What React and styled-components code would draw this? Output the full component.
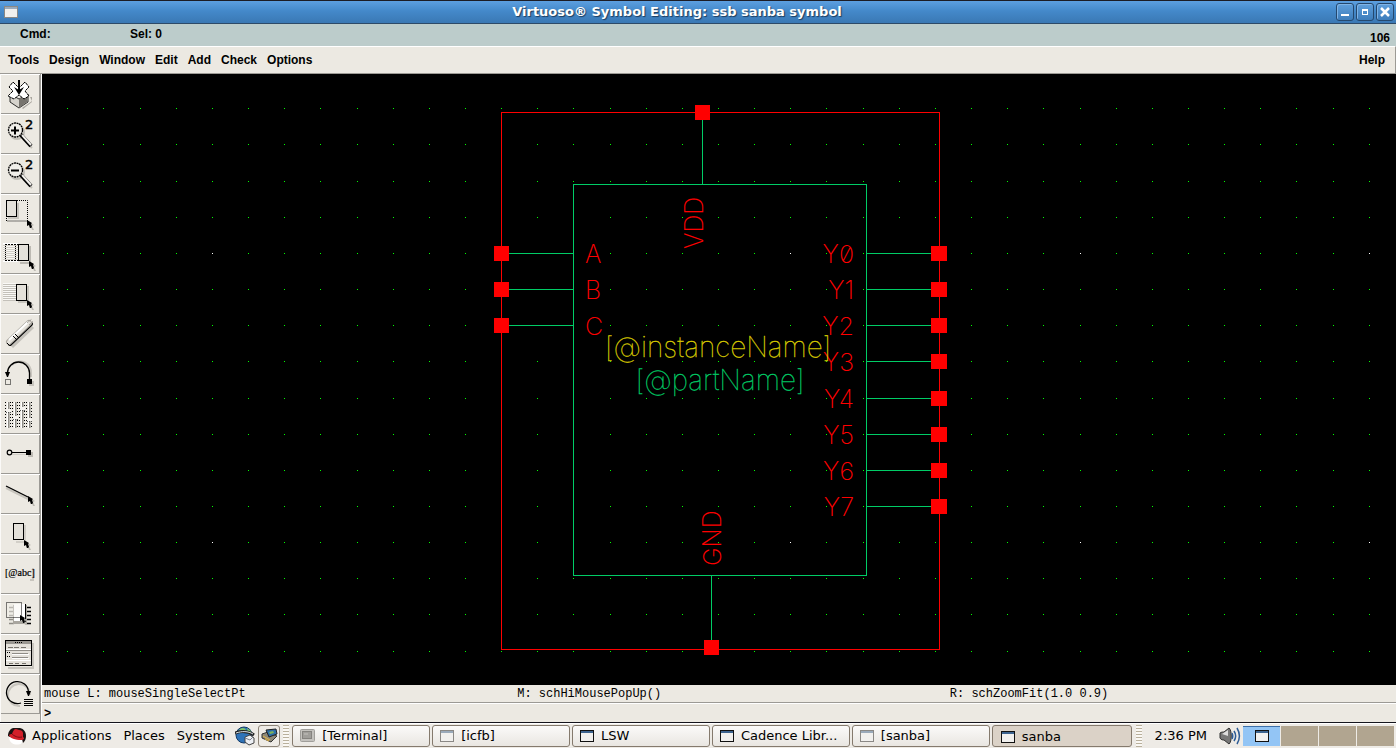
import React from 'react'
import styled, { createGlobalStyle } from 'styled-components'


const GlobalStyle = createGlobalStyle`
  * { box-sizing : border-box; }
  body {
    margin : 0;
    background : #ece9e2;
    font-family : "DejaVu Sans", sans-serif;
    color : #000;
  }
  button { font : inherit; color : inherit; }
`

const menus = ['Tools', 'Design', 'Window', 'Edit', 'Add', 'Check', 'Options']

const tasks = [
  { name: '[Terminal]', icon: 'terminal' },
  { name: '[icfb]', icon: 'dim' },
  { name: 'LSW', icon: 'window' },
  { name: 'Cadence Libr...', icon: 'window' },
  { name: '[sanba]', icon: 'dim' },
  { name: 'sanba', icon: 'window', active: true },
]

const outputs = [253, 289, 325, 361, 398, 434, 470, 506]
const inputs = [['A', 253], ['B', 289], ['C', 325]]

const range = (n) => Array.from({ length: n }, (_, i) => i)

// grid pitch is not a whole pixel, so each dot is snapped down
const gridStep = (i) => Math.floor(i * 36.15 + 0.81)


/* ---------- toolbar drawings, all on a 40 x 40 grid ---------- */

function Pointer({ x, y }) {
  return (
    <g transform={`translate(${x} ${y})`}>
      <path d="M2 2l5 3-2 1 2 4-2 0-1-3-2 1z" fill="#bdbab3" />
      <path d="M0 0l5 3-1 1 1 3-1 1-1 0-1-3-2 1z" fill="#000" />
    </g>
  )
}

function Magnifier({ minus }) {
  return (
    <>
      <g stroke="#c2bfb8" fill="none" strokeWidth="2">
        <circle cx="17" cy="18" r="7" />
        <path d="M23 25l9 9" />
      </g>
      <path d="M21 21l10 11" stroke="#000" strokeWidth="4" />
      <path d="M22 21l9 10" stroke="#f4f2ee" strokeWidth="2" />
      <circle cx="15.5" cy="16" r="7" fill="#f1efea" stroke="#000" strokeWidth="1.3" strokeDasharray="2 .6" />
      <path d="M11 16.5h8" stroke="#000" strokeWidth="2" />
      {!minus && <path d="M15 12.5v8" stroke="#000" strokeWidth="2" />}
      <text x="25" y="15" fontFamily="DejaVu Sans" stroke="#000" strokeWidth="0.5" fontSize="13">2</text>
    </>
  )
}

const toolIcons = [
  ['Check and save', (
    <>
      <path d="M22 34l10-7-2-4 2 0 0 5-9 7z" fill="#a9a69f" />
      <path d="M10 20v8l9 6 9-6v-8l-9 5z" fill="#d6d3cc" stroke="#000" strokeWidth="0.8" />
      <path d="M19 25v9l8-6v-8z" fill="#77746e" />
      <path d="M13 8l6 6 6-6 4 5-4 4 4 5-5 3-5-4-5 4-6-3 5-5-4-4z" fill="#fff" stroke="#000" strokeDasharray="3 .6" />
      <path d="M19 6v11" stroke="#000" strokeWidth="2" />
      <path d="M14 13l5 8 5-8-5 3z" fill="#000" />
    </>
  )],
  ['Zoom in by 2', <Magnifier />],
  ['Zoom out by 2', <Magnifier minus />],
  ['Stretch', (
    <>
      <path d="M18 9v15H8" stroke="#c8c5be" strokeWidth="2" fill="none" />
      <path d="M17 6.5h10.500v20.500H6.500v-4" stroke="#000" strokeDasharray="1 1" fill="none" />
      <rect x="6.500" y="6.500" width="10" height="16" fill="#e4e1da" stroke="#000" />
      <Pointer x={27} y={26} />
    </>
  )],
  ['Copy', (
    <>
      {range(10).map(i => <path key={i} d={`M3 ${9.5 + i * 2}h15`} stroke={i % 9 ? '#d2cfc8' : '#fff'} />)}
      {range(9).map(i => <path key={i} d={`M3 ${10.5 + i * 2}h15`} stroke="#f8f6f2" />)}
      <path d="M5.500 10v18M15.500 10v18" stroke="#000" strokeDasharray="1 1" />
      <path d="M5 10.500h13M5 26.500h13" stroke="#000" strokeDasharray="2 1" />
      <path d="M30 12v17H20" stroke="#bdbab3" strokeWidth="2" fill="none" />
      <rect x="18.500" y="10.500" width="10" height="16" fill="#e4e1da" stroke="#000" />
      <Pointer x={29} y={27} />
    </>
  )],
  ['Move', (
    <>
      {range(9).map(i => <path key={i} d={`M3 ${10.5 + i * 2}h13`} stroke="#c4c1ba" />)}
      {range(9).map(i => <path key={i} d={`M3 ${9.5 + i * 2}h13`} stroke="#faf9f6" />)}
      <path d="M28 12v16H18" stroke="#c8c5be" strokeWidth="2" fill="none" />
      <rect x="16.500" y="10.500" width="10" height="16" fill="#e4e1da" stroke="#000" />
      <Pointer x={27} y={26} />
    </>
  )],
  ['Delete', (
    <>
      <path d="M12 33L33 13" stroke="#c4c1ba" strokeWidth="3" />
      <path d="M10 30L31 10" stroke="#000" strokeWidth="4" strokeLinecap="round" />
      <path d="M9 28L29 9" stroke="#a9a69f" strokeWidth="6" strokeLinecap="round" />
      <path d="M9 28L29 9" stroke="#e4e1da" strokeWidth="4" strokeLinecap="round" />
      <path d="M9 26L28 8" stroke="#fff" strokeWidth="2" />
      <path d="M7 29l2 2" stroke="#000" />
      <path d="M13 22l4 4M15 20l4 4" stroke="#000" />
      <path d="M27 9l5-4M29 11l4-4" stroke="#8f8c86" strokeDasharray="1 1" />
    </>
  )],
  ['Undo', (
    <>
      <path d="M31 23V20A11 11 0 0 0 12 11" stroke="#c8c5be" strokeWidth="2" fill="none" />
      <path d="M29.500 25V19A11 11 0 0 0 7.500 19" stroke="#000" strokeWidth="1.300" fill="none" />
      <path d="M5 18h5l-2 5h-1z" fill="#000" />
      <rect x="5.500" y="25.500" width="5" height="5" fill="none" stroke="#000" strokeDasharray="1 1" />
      <rect x="29" y="27" width="5" height="5" fill="#c8c5be" />
      <rect x="27" y="25" width="5" height="5" fill="#000" />
    </>
  )],
  ['Properties', (
    <>
      {[8, 15, 22, 29].map((x, i) => (
        <g key={x}>
          <path d={`M${x - 2.5} 8v26M${x + 2.5} 8v26`} stroke="#000" strokeDasharray="1 2" />
          <path d={`M${x + 0.5} 8v26`} stroke="#8f8c86" strokeWidth="2" />
          <path d={`M${x - 0.5} 8v26`} stroke="#fff" />
          <rect x={x - 2} y={[15, 22, 13, 24][i]} width="5" height="3" fill="#f4f2ee" />
          <path d={`M${x - 2} ${[18, 25, 16, 27][i] + 0.5}h5`} stroke="#555" strokeDasharray="1 1" />
        </g>
      ))}
    </>
  )],
  ['Pin', (
    <>
      <path d="M12 20.500h14" stroke="#d2cfc8" />
      <rect x="28" y="18" width="5" height="5" fill="#bdbab3" />
      <circle cx="9.500" cy="18.500" r="2.300" fill="#ece9e2" stroke="#000" strokeWidth="1.200" />
      <path d="M12 18.500h15" stroke="#000" />
      <rect x="26" y="16" width="5" height="5" fill="#000" />
    </>
  )],
  ['Line', (
    <>
      <path d="M6 14l22 11" stroke="#c8c5be" strokeWidth="2" />
      <path d="M6 12l22 11" stroke="#000" strokeWidth="1.300" />
      <Pointer x={28} y={22} />
    </>
  )],
  ['Rectangle', (
    <>
      <path d="M25 11v17H16" stroke="#d2cfc8" strokeWidth="2" fill="none" />
      <rect x="13.500" y="9.500" width="10" height="16" fill="#e4e1da" stroke="#000" />
      <Pointer x={24} y={26} />
    </>
  )],
  ['Label', (
    <>
      <path d="M33 14v12h-3" stroke="#c8c5be" strokeWidth="2" fill="none" />
      <text x="5" y="22" fontFamily="Liberation Serif" fontSize="10" stroke="#000" strokeWidth="0.2">[@abc]</text>
    </>
  )],
  ['Selection box', (
    <>
      {range(5).map(i => <path key={i} d={`M26 ${13.5 + i * 4}h5`} stroke="#000" strokeWidth="1.500" />)}
      {range(5).map(i => <path key={i} d={`M9 ${13.5 + i * 4}h5`} stroke="#8f8c86" strokeWidth="1.500" />)}
      <rect x="13" y="11" width="14" height="19" fill="#a9a69f" />
      <rect x="14" y="10" width="11" height="17" fill="#fff" />
      <path d="M25.500 10v18" stroke="#000" />
      <rect x="6.500" y="8.500" width="15" height="15" fill="#f4f2ee" fillOpacity="0.400" stroke="#000" strokeDasharray="1 1" />
      <Pointer x={20} y={21} />
    </>
  )],
  ['Options form', (
    <>
      <path d="M33 9v25H8" stroke="#c8c5be" strokeWidth="2" fill="none" />
      <rect x="5.500" y="6.500" width="26" height="25" fill="#e4e1da" stroke="#000" />
      <rect x="6" y="7" width="25" height="3" fill="#9a9791" />
      <path d="M15 8.500h7" stroke="#000" strokeDasharray="1 1" />
      {[8, 14, 21].map(x => <path key={x} d={`M${x} 13.500h5M${x + 1} 29.500h4`} stroke="#77746e" />)}
      <path d="M6 15.500h25M12 20.500h17M12 24.500h17M6 26.500h25" stroke="#fff" />
      <path d="M6 16.500h25M12 19.500h16M12 23.500h16" stroke="#8f8c86" />
      <path d="M7 18.500h4M7 22.500h4" stroke="#000" strokeDasharray="1 1" />
    </>
  )],
  ['Repeat', (
    <>
      <path d="M20 32A11 11 0 1 1 30 21" stroke="#c8c5be" strokeWidth="2" fill="none" />
      <path d="M21 29A11 11 0 1 1 28.500 18" stroke="#000" strokeWidth="1.300" fill="none" />
      <path d="M26 17h5l-2 5h-1z" fill="#000" />
      <path d="M24 25.500h9M24 27.500h9M24 29.500h9M24 31.500h9" stroke="#000" />
    </>
  )],
]


/* ---------- small pictures of the desktop ---------- */

function WindowIcon({ dim }) {
  return (
    <svg width="14" height="12" viewBox="0 0 14 12" shapeRendering="crispEdges" aria-hidden="true">
      <rect x="0.500" y="0.500" width="13" height="11" fill="#f1f0ee" stroke={dim ? '#8a8885' : '#111'} />
      <rect x="1" y="1" width="12" height="2" fill={dim ? '#9aaabb' : '#3d6490'} />
    </svg>
  )
}

function TerminalIcon() {
  return (
    <svg width="15" height="14" viewBox="0 0 15 14" aria-hidden="true">
      <rect x="0.500" y="0.500" width="14" height="12" rx="1" fill="#c4c2be" stroke="#a09e9a" />
      <rect x="2.500" y="2.500" width="9" height="7" fill="#a09e9a" stroke="#85837f" />
      <path d="M4 5h4" stroke="#c4c2be" />
    </svg>
  )
}

function RedHat() {
  return (
    <svg width="20" height="18" viewBox="0 0 20 18" aria-hidden="true">
      <circle cx="10" cy="9" r="8" fill="#fff" />
      <path d="M1 9c0-4 2-7 5-8h7c4 1 6 4 6 8 0 3-1 5-3 7l-1-4-12-2z" fill="#1a1212" />
      <path d="M2 8c1-1 2-1 3-1 1-3 2-5 4-5 1 0 2 1 3 1 2 0 4 1 4 3v4c2 1 1 3-2 3-5 0-12-2-12-5z" fill="#d3202a" />
      <path d="M5 7c2 2 6 4 10 3" stroke="#7d0d13" fill="none" />
      <path d="M2 11c3 3 8 3 12 3l1 2c-4 3-12 2-13-5z" fill="#fff" />
    </svg>
  )
}

function BrowserIcon() {
  return (
    <svg width="20" height="20" viewBox="0 0 20 20" aria-hidden="true">
      <circle cx="9" cy="9" r="8" fill="#2f73b8" stroke="#143a66" />
      <path d="M4 4c3-3 6-2 7 0s-2 3-4 3-4 0-3-3zM12 2l4 3 0 3-3-1z" fill="#7fc36a" />
      <path d="M0 7c6-2 13-2 19 2" stroke="#222" strokeWidth="3" fill="none" />
      <path d="M1 7c6-2 12-2 17 1" stroke="#dfe7ee" fill="none" />
      <path d="M10 11l5-2 4 3 0 5-5 2-4-3z" fill="#eceff4" stroke="#444" />
      <path d="M10 12l5 2 3-3" stroke="#7a7f8a" fill="none" />
    </svg>
  )
}

function DesktopIcon() {
  return (
    <svg width="17" height="15" viewBox="0 0 17 15" aria-hidden="true">
      <path d="M1 6l6-2 9 4-6 6-9-4z" fill="#8d8878" stroke="#333" />
      <path d="M5 2l10-1 1 5-8 3z" fill="#2e6fa8" stroke="#222" />
      <path d="M8 4l4-1 1 2-4 1z" fill="#7fb35a" />
      <path d="M2 8l7 4M4 11l4 2" stroke="#e2b344" />
    </svg>
  )
}

function SpeakerIcon() {
  return (
    <svg width="22" height="18" viewBox="0 0 22 18" aria-hidden="true">
      <path d="M1 6c1-1 3-1 4-1l5-4c3 2 3 14 0 16l-5-4c-1 0-3 0-4-2z" fill="#777" stroke="#333" />
      <path d="M3 7l6-4v6z" fill="#ddd" />
      <path d="M13 6c1 2 1 4 0 6M15 4c2 3 2 7 0 10M18 1c3 5 3 11 0 16" stroke="#2d5c96" strokeWidth="1.500" fill="none" />
    </svg>
  )
}


/* ---------- the schematic symbol ---------- */

function Schematic() {
  return (
    <Drawing viewBox="42 74 1354 611" role="img" aria-label="sanba symbol">
      <g shapeRendering="crispEdges">
        {range(16).map(j => range(37).map(i => (
          <rect
            key={`${i}-${j}`}
            x={67 + gridStep(i)}
            y={108 + gridStep(j)}
            width="1"
            height="1"
            fill={i % 8 === 4 && j % 8 === 4 ? '#fff' : '#0f0'}
          />
        )))}

        <rect x="501.500" y="112.500" width="438" height="537" fill="none" stroke="#f00" />
        <g fill="none" stroke="#00cc66">
          <rect x="573.500" y="184.500" width="293" height="391" />
          <path d="M702.500 112V184M711.500 576V648" />
          {inputs.map(([name, y]) => <path key={name} d={`M502 ${y + 0.5}H573`} />)}
          {outputs.map(y => <path key={y} d={`M867 ${y + 0.5}H939`} />)}
        </g>

        <g fill="#f00">
          <rect x="695" y="105" width="15" height="15" />
          <rect x="704" y="640" width="15" height="15" />
          {inputs.map(([name, y]) => <rect key={name} x="494" y={y - 7} width="15" height="15" />)}
          {outputs.map(y => <rect key={y} x="931" y={y - 7} width="16" height="15" />)}
        </g>
      </g>

      {inputs.map(([name, y]) => <PinText key={name} x="585" y={y + 10}>{name}</PinText>)}
      {outputs.map((y, i) => <PinText key={y} x="854" y={y + 10} textAnchor="end">Y{i}</PinText>)}
      <PinText transform="translate(703 249) rotate(-90)">VDD</PinText>
      <PinText transform="translate(721 566) rotate(-90)">GND</PinText>
      <NameText x="718" y="357" textAnchor="middle" $color="#d9cc00">[@instanceName]</NameText>
      <NameText x="720" y="390" textAnchor="middle" $color="#00cc66">[@partName]</NameText>
    </Drawing>
  )
}


export default function App() {

  const [command, setCommand] = React.useState('')

  return (
    <Desktop>
      <GlobalStyle />

      <TitleBar>
        <WindowIcon dim />
        <Title>Virtuoso® Symbol Editing: ssb sanba symbol</Title>
        <WindowButtons>
          <WindowButton aria-label="Minimize">
            <svg width="16" height="16" shapeRendering="crispEdges"><path d="M4 11h8" stroke="#fff" strokeWidth="2" /></svg>
          </WindowButton>
          <WindowButton aria-label="Maximize">
            <svg width="16" height="16" shapeRendering="crispEdges">
              <path d="M5 6h6M5 10.500h6M5.500 5v6M10.500 5v6" stroke="#fff" />
              <path d="M5 6h6" stroke="#fff" strokeWidth="2" />
            </svg>
          </WindowButton>
          <WindowButton aria-label="Close">
            <svg width="16" height="16"><path d="M4 4l8 8M12 4l-8 8" stroke="#fff" strokeWidth="2.500" /></svg>
          </WindowButton>
        </WindowButtons>
      </TitleBar>

      <StatusBar>
        <span>Cmd:</span>
        <span>Sel: 0</span>
        <Count>106</Count>
      </StatusBar>

      <MenuBar>
        {menus.map(m => <MenuButton key={m}>{m}</MenuButton>)}
        <MenuButton $last>Help</MenuButton>
      </MenuBar>

      <Main>
        <ToolBar>
          {toolIcons.map(([name, icon]) => (
            <ToolButton key={name} aria-label={name}>
              <svg width="40" height="40" viewBox="0 0 40 40">{icon}</svg>
            </ToolButton>
          ))}
        </ToolBar>

        <Work>
          <Canvas><Schematic /></Canvas>
          <MouseLine>
            <span>mouse L: mouseSingleSelectPt</span>
            <span>M: schHiMousePopUp()</span>
            <span>R: schZoomFit(1.0 0.9)</span>
          </MouseLine>
          <Prompt>
            <label htmlFor="command">&gt;</label>
            <input id="command" value={command} onChange={e => setCommand(e.target.value)} />
          </Prompt>
        </Work>
      </Main>

      <Panel>
        <PanelMenus>
          <PanelButton><RedHat />Applications</PanelButton>
          <PanelButton>Places</PanelButton>
          <PanelButton>System</PanelButton>
        </PanelMenus>
        <Launcher aria-label="Web browser"><BrowserIcon /></Launcher>
        <Launcher $framed aria-label="Show desktop"><DesktopIcon /></Launcher>
        <Handle />
        <TaskList>
          {tasks.map(t => (
            <Task key={t.name} $active={t.active}>
              {t.icon === 'terminal' ? <TerminalIcon /> : <WindowIcon dim={t.icon === 'dim'} />}
              <span>{t.name}</span>
            </Task>
          ))}
        </TaskList>
        <Handle />
        <Clock>2:36 PM</Clock>
        <Launcher aria-label="Volume"><SpeakerIcon /></Launcher>
        <Workspaces>
          <Workspace $current aria-label="Workspace 1"><WindowIcon /></Workspace>
          <Workspace aria-label="Workspace 2" />
          <Workspace aria-label="Workspace 3" />
          <Workspace aria-label="Workspace 4" />
        </Workspaces>
      </Panel>
    </Desktop>
  )
}


const Desktop = styled.div`
  display : flex;
  flex-direction : column;
  min-height : 100vh;
`
const TitleBar = styled.header`
  display : flex;
  align-items : center;
  height : 24px;
  padding : 0 2px 0 4px;
  border-top : 1px solid #1c1c24;
  border-bottom : 1px solid #2d4a68;
  background : linear-gradient(#5c9fe0, #4489ca 45%, #3a78b4);
`
const Title = styled.h1`
  flex : 1;
  margin : 0;
  text-align : center;
  font-size : 13px;
  line-height : 22px;
  color : #fff;
  text-shadow : 1px 1px 1px #1c3c5e;
`
const WindowButtons = styled.div`
  display : flex;
  gap : 2px;
`
const WindowButton = styled.button`
  width : 18px;
  height : 18px;
  padding : 0;
  border : 1px solid #24486e;
  border-radius : 3px;
  background : linear-gradient(#5f9fdc, #3d7dbb);
  box-shadow : inset 1px 1px 0 #7fb3e6;
  svg { display : block; }
`
const StatusBar = styled.div`
  display : grid;
  grid-template-columns : 110px 110px 1fr;
  height : 22px;
  padding : 0 6px 0 20px;
  background : #bccccb;
  font : bold 12px/20px "Liberation Sans", sans-serif;
`
const Count = styled.output`
  align-self : end;
  text-align : right;
  line-height : 16px;
`
const MenuBar = styled.nav`
  display : flex;
  align-items : center;
  gap : 10px;
  height : 28px;
  padding : 0 10px 0 8px;
  border-top : 1px solid #fff;
  border-right : 1px solid #9c9a95;
  border-bottom : 1px solid #9c9a95;
`
const MenuButton = styled.button`
  padding : 0;
  border : 0;
  background : none;
  font : bold 12px/20px "Liberation Sans", sans-serif;
  margin-left : ${props => props.$last ? 'auto' : '0'};
`
const Main = styled.main`
  display : flex;
  flex : 1;
`
const ToolBar = styled.div`
  display : flex;
  flex-direction : column;
  width : 42px;
  border-left : 1px solid #fbfaf8;
  border-right : 1px solid #fff;
  box-shadow : inset -1px 0 0 #9c9a95;
`
const ToolButton = styled.button`
  width : 39px;
  height : 40px;
  padding : 0;
  border : 0;
  overflow : hidden;
  background : #ece9e2;
  box-shadow : inset 0 1px 0 #fff, inset -1px -1px 0 #9c9a95;
  svg {
    display : block;
    margin-left : -1px;
  }
`
const Work = styled.div`
  display : flex;
  flex-direction : column;
  flex : 1;
  min-width : 0;
`
const Canvas = styled.div`
  display : flex;
  flex : 1;
  background : #000;
`
const Drawing = styled.svg`
  flex : 1;
  width : 100%;
  min-width : 0;
`
const PinText = styled.text`
  fill : ${props => props.$color || '#f00'};
  font-family : Inter, Lato, sans-serif;
  font-weight : 200;
  font-size : 25px;
  font-feature-settings : "zero";
`
const NameText = styled(PinText)`
  font-size : 28px;
  font-weight : 100;
  stroke : ${props => props.$color};
  stroke-width : 0.3px;
`
const MouseLine = styled.div`
  display : grid;
  grid-template-columns : 35% 32% 1fr;
  height : 18px;
  padding-left : 2px;
  border-bottom : 1px solid #9c9a95;
  font : 12px/18px "Liberation Mono", monospace;
  white-space : nowrap;
`
const Prompt = styled.div`
  display : flex;
  height : 19px;
  padding-left : 2px;
  border-top : 1px solid #fff;
  font : bold 12px/20px "Liberation Mono", monospace;
  input {
    flex : 1;
    min-width : 0;
    padding : 0 4px;
    border : 0;
    outline : 0;
    background : none;
    font : inherit;
  }
`
const Panel = styled.footer`
  display : flex;
  align-items : center;
  height : 26px;
  padding-right : 2px;
  border-top : 1px solid #14141c;
  background : #eeebe6;
  box-shadow : inset 0 1px 0 #fff;
  font-size : 13px;
`
const PanelMenus = styled.div`
  display : flex;
  gap : 12px;
  padding : 0 9px 0 7px;
`
const PanelButton = styled.button`
  display : flex;
  align-items : center;
  gap : 5px;
  padding : 0;
  border : 0;
  background : none;
  line-height : 20px;
`
const Launcher = styled.button`
  display : flex;
  align-items : center;
  justify-content : center;
  width : 22px;
  height : 22px;
  margin-right : 2px;
  padding : 0;
  border : ${props => props.$framed ? '1px solid #8d8478' : '0'};
  border-radius : 3px;
  background : none;
`
const Handle = styled.div`
  width : 6px;
  height : 22px;
  margin : 0 3px 0 1px;
  background : repeating-linear-gradient(#b9b09c 0 1px, #faf8f4 1px 3px);
`
const TaskList = styled.div`
  display : flex;
  flex : 1;
  gap : 2px;
  min-width : 0;
  padding-right : 3px;
`
const Task = styled.button`
  display : flex;
  flex : 1;
  align-items : center;
  gap : 7px;
  min-width : 0;
  height : 22px;
  padding : ${props => props.$active ? '2px 8px 0' : '0 7px'};
  border : 1px solid #857a6d;
  border-radius : 3px;
  background : ${props => props.$active ? '#dbd2c7' : 'linear-gradient(#fbfaf9, #e9e6e1)'};
  white-space : nowrap;
  svg { flex : none; }
`
const Clock = styled.time`
  padding : 0 12px 0 10px;
`
const Workspaces = styled.div`
  display : grid;
  grid-template-columns : repeat(4, 37px);
  gap : 1px;
`
const Workspace = styled.button`
  display : flex;
  align-items : center;
  justify-content : center;
  height : 20px;
  padding : 0;
  border : 0;
  border-top : ${props => props.$current ? '1px solid #3d6fa8' : '0'};
  background : ${props => props.$current ? '#93c5f5' : '#b1a590'};
`
